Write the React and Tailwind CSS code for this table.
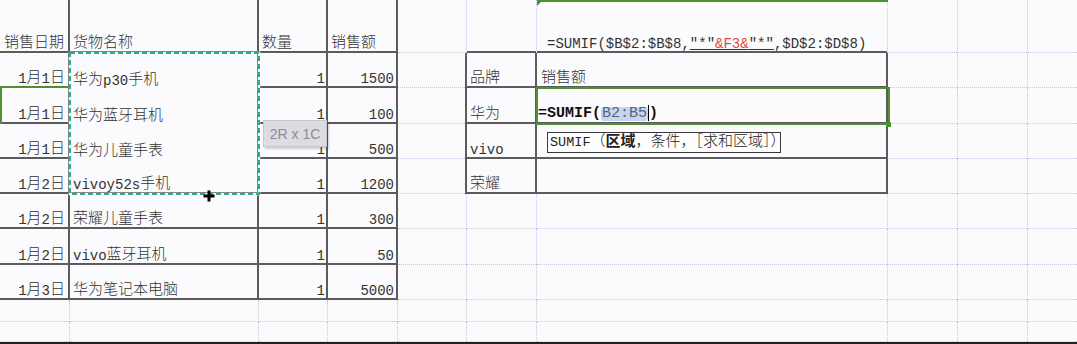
import React from "react";

const rows = [
  ["销售日期", "货物名称", "数量", "销售额", "", "", "F1", "", "", ""],
  ["1月1日", "华为p30手机", "1", "1500", "", "品牌", "销售额", "", "", ""],
  ["1月1日", "华为蓝牙耳机", "1", "100", "", "华为", "EDIT", "", "", ""],
  ["1月1日", "华为儿童手表", "1", "500", "", "vivo", "", "", "", ""],
  ["1月2日", "vivoy52s手机", "1", "1200", "", "荣耀", "", "", "", ""],
  ["1月2日", "荣耀儿童手表", "1", "300", "", "", "", "", "", ""],
  ["1月2日", "vivo蓝牙耳机", "1", "50", "", "", "", "", "", ""],
  ["1月3日", "华为笔记本电脑", "1", "5000", "", "", "", "", "", ""],
  ["", "", "", "", "", "", "", "", "", ""],
  ["", "", "", "", "", "", "", "", "", ""],
];

const CJK = /[\u3000-\u303f\u4e00-\u9fff\uff00-\uffef]/;

// split CJK runs from latin so each gets its own size
function Txt({ s }) {
  const parts = s.split(/([\u3000-\u303f\u4e00-\u9fff\uff00-\uffef]+)/).filter(Boolean);
  return parts.map((p, i) =>
    CJK.test(p) ? (
      <span key={i} className="text-[15px] font-light">{p}</span>
    ) : (
      <span key={i} className="text-[14px]">{p}</span>
    )
  );
}

function rightKind(r, c) {
  if (c <= 3 && r <= 7) return "dark";
  if (c === 4 && r >= 1 && r <= 4) return "dark";
  if ((c === 5 || c === 6) && r >= 1 && r <= 4) return "dark";
  return "grid";
}

function bottomKind(r, c) {
  if (c === 0 && r === 1) return "green";
  if (c === 1 && r >= 1 && r <= 3) return "none";
  if (c <= 3 && r <= 7) return "dark";
  if ((c === 5 || c === 6) && r <= 4) return "dark";
  return "grid";
}

const rightCls = {
  dark: "border-r-2 border-[#5c5c5c]",
  grid: "border-r border-dotted border-[#c6c6e4]",
};

const bottomCls = {
  dark: "border-b-2 border-[#5c5c5c]",
  grid: "border-b border-dotted border-[#c6c6e4]",
  green: "border-b-2 border-[#4f8f34]",
  none: "",
};

function FormulaText() {
  return (
    <span className="text-[14px] text-[#333]">
      =SUMIF($B$2:$B$8,
      <span className="underline decoration-[#333]">
        "*"<span className="text-[#e2483f] decoration-[#e2483f]">&amp;F3&amp;</span>"*"
      </span>
      ,$D$2:$D$8)
    </span>
  );
}

function EditText() {
  return (
    <span className="flex items-end text-[15px] text-[#111]">
      <span className="font-bold">=SUMIF(</span>
      <span className="bg-[#c9d5ee] text-[#56657f] rounded-[3px] px-[1px]">B2:B5</span>
      <span className="inline-block w-px h-[16px] bg-black"></span>
      <span className="font-bold">)</span>
    </span>
  );
}

function Cell({ r, c, v }) {
  const right = (c === 0 || c === 2 || c === 3) && r >= 1;
  let pad = "pl-[3px]";
  if (c === 0 && r === 0) pad = "pl-[4px]";
  if (c === 0 && r >= 1) pad = "pr-[3px]";
  if (c === 2 && r >= 1) pad = "pr-[1px]";
  if (c === 3 && r >= 1) pad = "pr-[2px]";
  if (c === 6 && r === 0) pad = "pl-[10px]";
  if (c === 6 && r === 1) pad = "pl-[4px]";
  if (c === 6 && r === 2) pad = "pl-[1px] pb-[1px]";

  let content = null;
  if (v === "F1") content = <FormulaText />;
  else if (v === "EDIT") content = <EditText />;
  else if (v) content = <Txt s={v} />;

  return (
    <div className={`flex min-w-0 ${rightCls[rightKind(r, c)]}`}>
      <div
        className={`flex-1 min-w-0 flex items-end whitespace-nowrap ${
          right ? "justify-end" : "justify-start"
        } ${pad} ${bottomCls[bottomKind(r, c)]}`}
      >
        {content}
      </div>
    </div>
  );
}

export default function App() {
  return (
    <div className="w-[1077px] h-[344px] overflow-hidden bg-[#fbfbfd] text-[#333] leading-[14px] font-['Liberation_Mono','Noto_Sans_CJK_SC',monospace]">
      <div className="relative">
        <div className="grid grid-cols-[70px_189px_69px_70px_69px_70px_351px_70px_70px_70px] grid-rows-[53px_35px_36px_35px_35px_35px_36px_35px_22px_20px] w-[1098px]">
          {rows.map((row, r) => row.map((v, c) => <Cell key={`${r}-${c}`} r={r} c={c} v={v} />))}
        </div>

        {/* copy selection around B2:B5 */}
        <svg className="absolute left-[68px] top-[51px] pointer-events-none" width="193" height="145">
          <rect x="2" y="2" width="189" height="141" fill="none" stroke="#fbfbfd" strokeWidth="2.5" />
          <rect x="2" y="2" width="189" height="141" fill="none" stroke="#2eaa8c" strokeWidth="2" strokeDasharray="5 3" />
        </svg>

        {/* active cell G3 */}
        <div className="absolute left-[536px] top-[87px] w-[354px] h-[38px] border-2 border-[#4f8f34] pointer-events-none"></div>
        <div className="absolute left-[886px] top-[122px] w-[5px] h-[5px] bg-[#4f8f34]"></div>
        <div className="absolute left-[537px] top-0 w-[351px] h-[2px] bg-[#4f8f34]"></div>
        <div className="absolute left-[537px] top-0 w-0 h-0 border-t-[6px] border-r-[6px] border-t-[#4f8f34] border-r-transparent"></div>
        <div className="absolute left-0 top-[87px] w-[2px] h-[37px] bg-[#4f8f34]"></div>

        {/* size hint */}
        <div className="absolute left-[263px] top-[120px] w-[64px] h-[27px] flex items-center justify-center bg-[#dcdce2] border border-[#c6c6ce] shadow-[2px_2px_2px_rgba(0,0,0,0.18)] text-[#8c8c94] text-[14px] font-['Liberation_Sans',sans-serif]">
          2R x 1C
        </div>

        {/* function hint */}
        <div className="absolute left-[547px] top-[132px] w-[234px] h-[21px] flex items-end pb-[2px] pl-[2px] bg-[#fefefe] border border-[#3a3a3a] text-[#222] whitespace-nowrap">
          <span className="text-[13.5px]">SUMIF</span>
          <span className="text-[15px] font-light">（</span>
          <span className="text-[15px] font-bold">区域</span>
          <span className="text-[15px] font-light">，条件，［求和区域］）</span>
        </div>

        {/* fill cursor */}
        <svg className="absolute left-[202px] top-[189px] pointer-events-none" width="14" height="14" viewBox="0 0 14 14">
          <path d="M7 1.5V12.5M1.5 7H12.5" stroke="#000" strokeWidth="3" />
        </svg>
      </div>
      <div className="h-[2px] bg-[#222]"></div>
    </div>
  );
}
